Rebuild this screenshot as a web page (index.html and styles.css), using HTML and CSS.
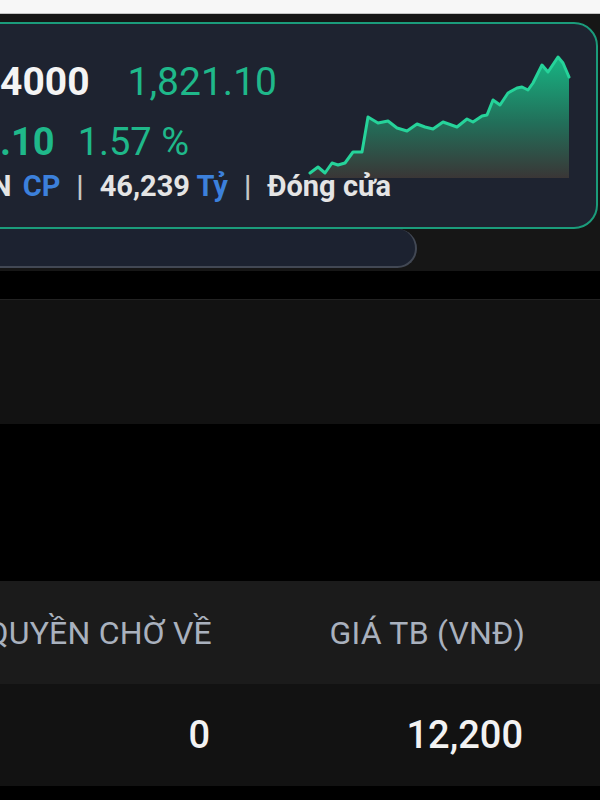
FILE: index.html
```html
<!DOCTYPE html>
<html lang="vi">
<head>
<meta charset="utf-8">
<title>Thị trường</title>
<link rel="stylesheet" href="styles.css">
</head>
<body>
<div class="topbar"></div>
<section class="market">
  <div class="card">
    <svg class="spark" viewBox="305 50 270 135" xmlns="http://www.w3.org/2000/svg">
      <defs>
        <linearGradient id="fill" gradientUnits="userSpaceOnUse" x1="0" y1="57" x2="0" y2="178">
          <stop offset="0" stop-color="#17b583"/>
          <stop offset="0.55" stop-color="#226e59"/>
          <stop offset="1" stop-color="#3a3636"/>
        </linearGradient>
      </defs>
      <path fill="url(#fill)" d="M310 173 L318 167 L325 173 L332 163 L338 165 L345 163 L353 152 L362 152 L368 117 L378 123 L388 121 L397 128 L407 131 L417 124 L425 127 L433 129 L443 122 L457 127 L467 119 L473 122 L482 116 L487 115 L493 100 L500 105 L508 93 L517 88 L522 87 L528 90 L533 83 L542 65 L548 72 L558 57 L563 63 L569 77 L569 178 L310 178 Z"/>
      <polyline fill="none" stroke="#26d39a" stroke-width="3" stroke-linejoin="round" stroke-linecap="round" points="310,173 318,167 325,173 332,163 338,165 345,163 353,152 362,152 368,117 378,123 388,121 397,128 407,131 417,124 425,127 433,129 443,122 457,127 467,119 473,122 482,116 487,115 493,100 500,105 508,93 517,88 522,87 528,90 533,83 542,65 548,72 558,57 563,63 569,77"/>
    </svg>
    <div class="quote">
      <div class="line-main"><span class="idx-val">4000</span><span class="last">1,821.10</span></div>
      <div class="line-change"><span class="chg">.10</span><span class="pct">1.57 %</span></div>
      <div class="line-meta"><span>N</span> <span class="unit first">CP</span><span class="sep">|</span><span>46,239</span> <span class="unit">Tỷ</span><span class="sep">|</span><span>Đóng cửa</span></div>
    </div>
  </div>
  <div class="pill"></div>
</section>
<div class="panel"></div>
<div class="holdings">
  <div class="head">
    <div class="cell">QUYỀN CHỜ VỀ</div>
    <div class="cell">GIÁ TB (VNĐ)</div>
    <div class="cell"></div>
  </div>
  <div class="row">
    <div class="cell">0</div>
    <div class="cell">12,200</div>
    <div class="cell"></div>
  </div>
</div>
</body>
</html>
```
FILE: styles.css
```css
html, body {
  margin: 0;
  padding: 0;
}
body {
  width: 600px;
  height: 800px;
  overflow: hidden;
  background: #000;
  font-family: Roboto, "Noto Sans", sans-serif;
}
.topbar {
  height: 13px;
  background: #f7f7f7;
  border-bottom: 1px solid #c4c4c4;
}
.market {
  background: #161616;
  padding: 8px 2px 3px 0;
}
.card {
  position: relative;
  margin-left: -24px;
  height: 207px;
  box-sizing: border-box;
  border: 2px solid #1b9c7b;
  border-radius: 24px;
  background: #1e2330;
  padding: 28px 0 0 22px;
}
.spark {
  position: absolute;
  left: 327px;
  top: 26px;
  width: 270px;
  height: 135px;
}
.quote {
  position: relative;
}
.line-main {
  display: flex;
  gap: 38px;
  font-size: 39px;
  line-height: 60px;
  white-space: nowrap;
}
.idx-val {
  color: #f4f4f4;
  font-weight: 700;
}
.last {
  color: #1fb88a;
}
.line-change {
  display: flex;
  gap: 23px;
  font-size: 38px;
  line-height: 60px;
  color: #1fb88a;
  white-space: nowrap;
}
.chg {
  font-weight: 700;
}
.line-meta {
  margin-left: -9px;
  font-size: 29px;
  line-height: 29px;
  font-weight: 700;
  color: #e4e4e4;
  white-space: nowrap;
}
.unit {
  color: #3c80db;
}
.unit.first {
  margin-left: 4px;
}
.sep {
  color: #c6c6c6;
  margin: 0 16px;
}
.pill {
  margin-left: -24px;
  width: 441px;
  height: 39px;
  box-sizing: border-box;
  border: 2px solid #424854;
  border-top: 0;
  border-radius: 0 20px 20px 20px;
  background: #1c2230;
}
.panel {
  margin-top: 28px;
  height: 124px;
  background: #121212;
  border-top: 1px solid #222;
}
.holdings {
  margin-top: 157px;
}
.head,
.row {
  display: grid;
  grid-template-columns: 212px 313px 1fr;
  align-items: center;
}
.head {
  height: 103px;
  background: #1b1b1b;
  color: #a9b1be;
  font-size: 32px;
  letter-spacing: 0.2px;
}
.row {
  height: 102px;
  background: #121212;
  color: #f2f2f2;
  font-size: 38px;
  font-weight: 500;
}
.cell {
  display: flex;
  justify-content: flex-end;
  white-space: nowrap;
}
.row .cell {
  padding-right: 2px;
}
```
